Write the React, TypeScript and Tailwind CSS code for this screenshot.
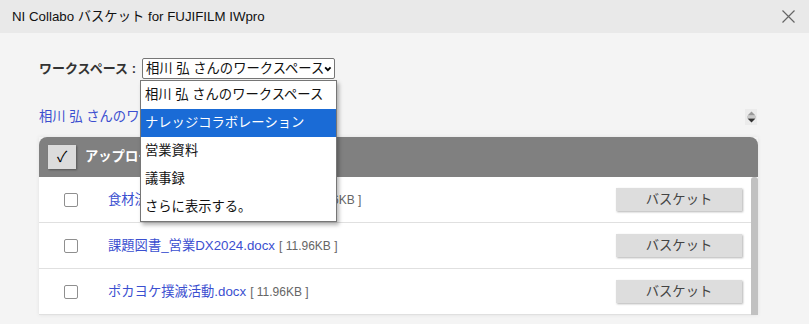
const FONT = "font-['Liberation_Sans','Noto_Sans_CJK_JP',sans-serif]";

const files = [
  { name: "食材流通システム改善計画.docx", size: "11.96KB" },
  { name: "課題図書_営業DX2024.docx", size: "11.96KB" },
  { name: "ポカヨケ撲滅活動.docx", size: "11.96KB" },
];

const options = [
  "相川 弘 さんのワークスペース",
  "ナレッジコラボレーション",
  "営業資料",
  "議事録",
  "さらに表示する。",
];

function WorkspaceSelect() {
  return (
    <div className="relative">
      <div className="flex h-[21px] w-[193px] items-center justify-between whitespace-nowrap rounded-[2px] border border-[#767676] bg-white pl-[3px] pr-[2px] text-[13.3px] leading-none text-[#111]">
        <span>相川 弘 さんのワークスペース</span>
        <svg width="10" height="8" viewBox="0 0 10 8" className="mt-[1px]">
          <path d="M1.5 2 L5 5.5 L8.5 2" fill="none" stroke="#000" strokeWidth="2.4" />
        </svg>
      </div>

      {/* open option list */}
      <div className="absolute left-[-2px] top-[22px] z-10 w-[197px] border border-[#767676] bg-white shadow-[2px_3px_4px_rgba(0,0,0,0.3)]">
        {options.map((opt, i) => (
          <div
            key={i}
            className={
              i === 1
                ? "flex h-[28px] items-center whitespace-nowrap bg-[#1a6bd6] pl-[4px] text-[13.3px] text-white"
                : "flex h-[28px] items-center whitespace-nowrap pl-[4px] text-[13.3px] text-[#111]"
            }
          >
            {opt}
          </div>
        ))}
      </div>
    </div>
  );
}

export default function App() {
  return (
    <div className={`${FONT} h-[324px] w-[809px] overflow-hidden bg-[#f4f4f4]`}>
      {/* Title bar */}
      <div className="flex h-[33px] items-center justify-between bg-[#e9e9e9] pl-[12px] pr-[14px]">
        <span className="text-[13.3px] text-[#111]">NI Collabo バスケット for FUJIFILM IWpro</span>
        <svg width="13" height="13" viewBox="0 0 13 13">
          <path d="M0.5 0.5 L12.5 12.5 M12.5 0.5 L0.5 12.5" stroke="#666" strokeWidth="1.2" />
        </svg>
      </div>

      <div className="pl-[39px] pr-[51px] pt-[25px]">
        {/* Workspace selector */}
        <div className="flex items-center gap-[6px]">
          <span className="text-[13px] font-bold text-[#333]">ワークスペース :</span>
          <WorkspaceSelect />
        </div>

        {/* Breadcrumb + sort */}
        <div className="mt-[29px] flex h-[18px] items-center justify-between">
          <span className="text-[13.3px] text-[#3b4fd0]">相川 弘 さんのワークスペース</span>
          <div className="mr-[1px] flex h-[16px] w-[12px] items-center justify-center bg-[#ebebeb]">
            <svg width="9" height="12" viewBox="0 0 9 12">
              <path d="M4.5 0.5 L8.5 4.5 L0.5 4.5 Z" fill="#9a9a9a" />
              <rect x="0" y="5.6" width="9" height="0.8" fill="#9a9a9a" />
              <path d="M0.5 7.5 L8.5 7.5 L4.5 11.5 Z" fill="#333" />
            </svg>
          </div>
        </div>

        {/* File panel */}
        <div className="mt-[11px] shadow-[0_0_4px_rgba(0,0,0,0.08)]">
          <div className="flex h-[40px] items-center gap-[9px] rounded-t-[8px] bg-[#808080] pl-[9px]">
            <div className="flex h-[24px] w-[28px] items-center justify-center bg-[#dcdcdc] text-[15px] text-black shadow-[1px_1px_2px_rgba(0,0,0,0.35)]">
              ✓
            </div>
            <span className="text-[13.3px] font-bold text-white">アップロードファイル</span>
          </div>

          <div className="flex bg-white">
            <div className="flex-1">
              {files.map((f, i) => (
                <div key={i} className="flex h-[46px] items-center border-b border-[#e0e0e0] pl-[25px] pr-[9px]">
                  <div className="h-[14px] w-[14px] rounded-[2px] border border-[#8f8f8f] bg-white" />
                  <div className="ml-[30px] flex flex-1 items-baseline gap-[4px] whitespace-nowrap">
                    <span className="text-[13.3px] text-[#3b4fd0]">{f.name}</span>
                    <span className="text-[12px] text-[#666]">[ {f.size} ]</span>
                  </div>
                  <button className="h-[23px] w-[126px] bg-[#dddddd] text-[13.3px] text-[#444] shadow-[1px_1px_2px_rgba(0,0,0,0.3)]">
                    バスケット
                  </button>
                </div>
              ))}
            </div>
            <div className="w-[7px] rounded-t-[3px] bg-[#c1c1c1]" />
          </div>
        </div>
      </div>
    </div>
  );
}
